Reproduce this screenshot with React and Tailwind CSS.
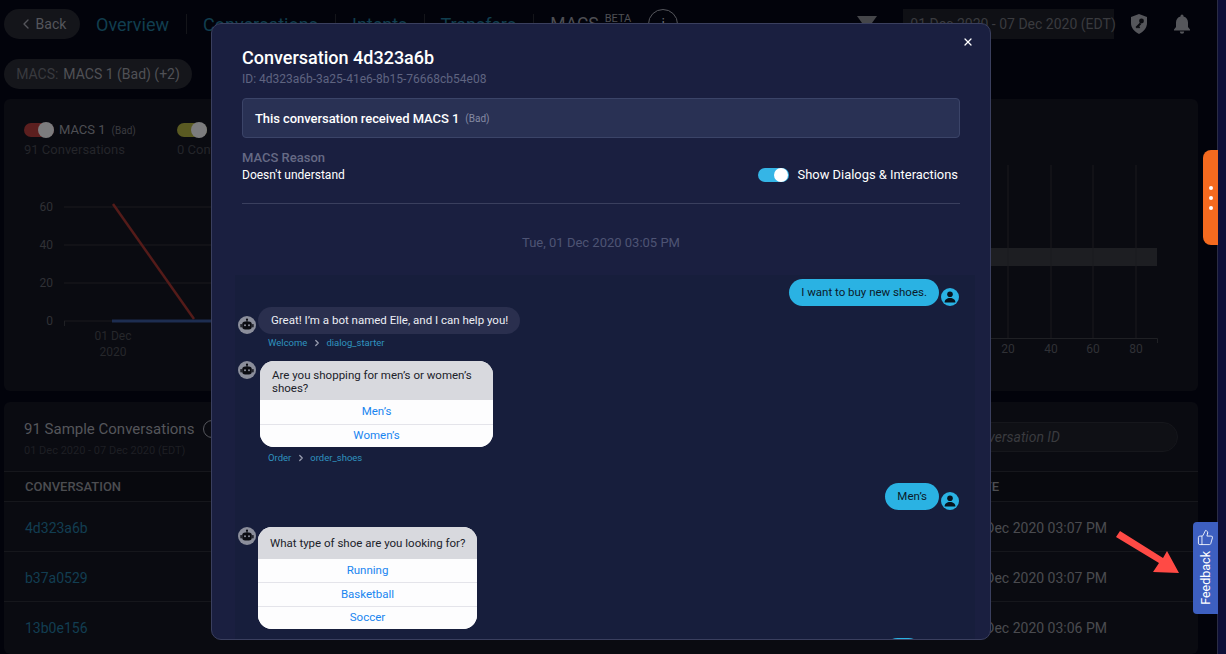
import React from "react";
import { ChevronLeft, ChevronRight, X, ThumbsUp } from "lucide-react";

function BotAvatar() {
  return (
    <div className="w-[18px] h-[18px] shrink-0 rounded-full bg-[#8b8e9b] flex items-center justify-center">
      <svg width="14" height="14" viewBox="0 0 14 14" fill="#0b0c12">
        <circle cx="7" cy="1.6" r="1.1" />
        <rect x="6.5" y="2" width="1" height="2" />
        <rect x="2.2" y="3.6" width="9.6" height="8" rx="3" />
        <rect x="0.4" y="6" width="1.4" height="3.4" rx="0.6" />
        <rect x="12.2" y="6" width="1.4" height="3.4" rx="0.6" />
        <circle cx="5" cy="7.2" r="1" fill="#8b8e9b" />
        <circle cx="9" cy="7.2" r="1" fill="#8b8e9b" />
      </svg>
    </div>
  );
}

function UserAvatar() {
  return (
    <div className="w-[18px] h-[18px] shrink-0 rounded-full bg-[#2ab2e3] flex items-center justify-center">
      <svg width="12" height="12" viewBox="0 0 12 12" fill="#07121c">
        <circle cx="6" cy="3.2" r="2.8" />
        <path d="M0.6 11.6c0-3 2.4-4.6 5.4-4.6s5.4 1.6 5.4 4.6z" />
      </svg>
    </div>
  );
}

function UserMessage({ text, className = "" }) {
  return (
    <div className={"flex justify-end items-end gap-[2px] " + className}>
      <div className="h-[27px] pl-[12px] pr-[12px] rounded-[14px] bg-[#2ab2e3] text-[#0b1a2a] text-[11.5px] flex items-center">{text}</div>
      <UserAvatar />
    </div>
  );
}

function Crumb({ a, b, className }) {
  return (
    <div className={"flex items-center h-[12px] text-[9.5px] text-[#2f93bf] " + className}>
      <span>{a}</span>
      <ChevronRight size={10} strokeWidth={3} className="text-[#9a9eb0] mx-[4.5px]" />
      <span>{b}</span>
    </div>
  );
}

function OptionCard({ title, options, width, titleClass, rowHeight }) {
  return (
    <div className={"rounded-[14px] overflow-hidden bg-white " + width}>
      <div className={"bg-[#d8d9de] text-[#20222a] text-[11.5px] leading-[12.5px] " + titleClass}>{title}</div>
      {options.map((o, i) => (
        <div key={o} className={"flex items-center justify-center text-[11.5px] text-[#1a85f0] bg-[#fdfdfe] " + rowHeight + (i > 0 ? " border-t border-[#e4e4ea]" : "")}>{o}</div>
      ))}
    </div>
  );
}

function Row({ id, time }) {
  return (
    <div className="h-[50px] border-t border-[#16171c] pt-[3px] flex items-center justify-between pl-[21px] pr-[91px] text-[14px]">
      <span className="text-[#123e52]">{id}</span>
      <span className="text-[#4a4b50]">{time}</span>
    </div>
  );
}

function Background() {
  return (
    <div className="w-[1217px] shrink-0 h-full pl-[4px] pr-[19px]">
      <header className="h-[48px] pt-[9px] flex items-start">
        <div className="w-[76px] h-[30px] shrink-0 rounded-full bg-[#14151a] text-[#55565c] text-[14px] flex items-center justify-center gap-[2px] mr-[16px]">
          <ChevronLeft size={16} />
          <span>Back</span>
        </div>
        <nav className="flex items-center h-[30px] shrink-0 whitespace-nowrap text-[18px] text-[#113e4f]">
          <span>Overview</span>
          <span className="w-px h-[20px] bg-[#14151a] ml-[17px] mr-[16px]" />
          <span>Conversations</span>
          <span className="w-px h-[20px] bg-[#14151a] ml-[17px] mr-[16px]" />
          <span>Intents</span>
          <span className="w-px h-[20px] bg-[#14151a] ml-[17px] mr-[15px]" />
          <span>Transfers</span>
          <span className="w-px h-[20px] bg-[#14151a] ml-[17px] mr-[16px]" />
          <span className="text-[#4e4f54] text-[17.5px]">MACS</span>
          <span className="text-[11px] text-[#4e4f54] ml-[6px] -mt-[10px]">BETA</span>
          <span className="w-[30px] h-[30px] rounded-full border border-[#55565c] ml-[17px] flex items-center justify-center text-[#6a6b70] text-[14px]">i</span>
        </nav>
        <div className="ml-[179px] mt-[7px] w-0 h-0 shrink-0 border-x-[10px] border-x-transparent border-t-[14px] border-t-[#45464a]" />
        <div className="ml-[26px] w-[211px] h-[30px] shrink-0 whitespace-nowrap bg-[#0f1015] text-[#3a3b3f] text-[14px] flex items-center pl-[7px]">01 Dec 2020 - 07 Dec 2020 (EDT)</div>
        <svg width="18" height="20" viewBox="0 0 18 20" className="ml-[16px] mt-[5px] shrink-0" fill="#55565b">
          <path d="M9 0l8 3v6c0 5-3.4 8.8-8 11C4.4 17.8 1 14 1 9V3z" />
          <circle cx="11.5" cy="7" r="2.4" fill="#0a0b10" />
          <path d="M10 8.5l-4.5 4.5 1.500 1.500 1-1 1 1 1.200-1.200-1-1 2-2z" fill="#0a0b10" />
        </svg>
        <svg width="18" height="20" viewBox="0 0 18 20" className="ml-[25px] mt-[5px] shrink-0" fill="#55565b">
          <path d="M9 0.5a1.500 1.500 0 0 1 1.500 1.500v.6C13.400 3.300 15 5.700 15 8.500V13l2 2.500v1H1v-1L3 13V8.500c0-2.800 1.600-5.200 4.500-5.900V2A1.500 1.500 0 0 1 9 .5z" />
          <path d="M6.800 17.500h4.400a2.200 2.200 0 0 1-4.400 0z" />
        </svg>
      </header>

      <div className="mt-[11px] w-[188px] h-[30px] rounded-full bg-[#15161b] text-[14px] flex items-center justify-center gap-[5px]">
        <span className="text-[#393a3f]">MACS:</span>
        <span className="text-[#505156]">MACS 1 (Bad) (+2)</span>
      </div>

      <section className="mt-[10px] h-[292px] rounded-[6px] bg-[#0a0b11] pl-[20px] pr-[28px] pt-[22px]">
        <div className="flex h-[39px]">
          <div className="w-[153px] pt-px">
            <div className="flex items-center h-[16px]">
              <div className="relative w-[30px] h-[14px] rounded-full bg-[#5c1f1f]">
                <span className="absolute right-0 -top-px w-[16px] h-[16px] rounded-full bg-[#7c7c7e]" />
              </div>
              <span className="ml-[5px] text-[13px] text-[#4e4f54]">MACS 1</span>
              <span className="ml-[6px] text-[10px] text-[#3a3b40]">(Bad)</span>
            </div>
            <div className="mt-[2px] text-[13px] text-[#24252a]">91 Conversations</div>
          </div>
          <div className="pt-px">
            <div className="flex items-center h-[16px]">
              <div className="relative w-[30px] h-[14px] rounded-full bg-[#5a5a22]">
                <span className="absolute right-0 -top-px w-[16px] h-[16px] rounded-full bg-[#7c7c7e]" />
              </div>
            </div>
            <div className="mt-[2px] w-[34px] overflow-hidden whitespace-nowrap text-[13px] text-[#24252a]">0 Conversations</div>
          </div>
        </div>
        <div className="flex justify-between">
          <svg width="500" height="215" viewBox="0 0 500 215" fontFamily="Roboto, sans-serif" fontSize="12" fill="#303136">
            {[47, 85, 123, 161].map((y) => (
              <line key={y} x1="40" x2="500" y1={y} y2={y} stroke="#1a1b1f" />
            ))}
            <line x1="40.5" x2="40.5" y1="161" y2="166" stroke="#1f2024" />
            <text x="29" y="51" textAnchor="end">60</text>
            <text x="29" y="89" textAnchor="end">40</text>
            <text x="29" y="127" textAnchor="end">20</text>
            <text x="29" y="165" textAnchor="end">0</text>
            <line x1="89" y1="44" x2="170" y2="159" stroke="#541b19" strokeWidth="2.5" />
            <line x1="88" y1="161" x2="500" y2="161" stroke="#1d2d50" strokeWidth="3" />
            <text x="89" y="180" textAnchor="middle" fill="#26272b">01 Dec</text>
            <text x="89" y="196" textAnchor="middle" fill="#26272b">2020</text>
          </svg>
          <svg width="360" height="215" viewBox="0 0 360 215" fontFamily="Roboto, sans-serif" fontSize="12" fill="#303136">
            <rect x="0" y="88" width="347" height="18" fill="#1d1e22" />
            {[198, 241, 283, 326].map((x) => (
              <line key={x} x1={x} x2={x} y1="5" y2="178" stroke="#1a1b1f" />
            ))}
            <path d="M0 178.5H347.5V183" fill="none" stroke="#1f2024" />
            <text x="198" y="193" textAnchor="middle">20</text>
            <text x="241" y="193" textAnchor="middle">40</text>
            <text x="283" y="193" textAnchor="middle">60</text>
            <text x="326" y="193" textAnchor="middle">80</text>
          </svg>
        </div>
      </section>

      <section className="mt-[11px] h-[252px] rounded-[6px] bg-[#0a0b11] overflow-hidden">
        <div className="h-[69px] flex justify-between pl-[20px] pr-[20px] pt-[17px]">
          <div>
            <div className="flex items-center gap-[9px]">
              <span className="text-[15px] leading-[20px] text-[#55565b]">91 Sample Conversations</span>
              <span className="w-[18px] h-[18px] rounded-full border border-[#55565c]" />
            </div>
            <div className="mt-[4px] text-[11px] text-[#1e1f24]">01 Dec 2020 - 07 Dec 2020 (EDT)</div>
          </div>
          <div className="w-[320px] h-[30px] mt-[3px] rounded-full bg-[#0f1015] border border-[#16171c] text-[14px] italic text-[#3a3b3f] flex items-center pl-[60px]">Search Conversation ID</div>
        </div>
        <div className="h-[30px] border-t border-[#16171c] bg-[#08090e] flex items-center justify-between pl-[21px] pr-[199px] text-[13px] font-medium text-[#4c4d51]">
          <span>CONVERSATION</span>
          <span>DATE</span>
        </div>
        <Row id="4d323a6b" time="01 Dec 2020 03:07 PM" />
        <Row id="b37a0529" time="01 Dec 2020 03:07 PM" />
        <Row id="13b0e156" time="01 Dec 2020 03:06 PM" />
      </section>
    </div>
  );
}

function Modal() {
  return (
    <div className="absolute left-[211px] top-[23px] w-[780px] h-[617px] rounded-[10px] border border-[#3a3f5e] bg-[#1a1f40] overflow-hidden pl-[30px] pr-[30px] pt-[22px]">
      <X size={12} strokeWidth={2.5} className="absolute right-[16px] top-[12px] text-white" />
      <h2 className="text-[18px] leading-[24px] font-medium text-white">Conversation 4d323a6b</h2>
      <div className="text-[12px] leading-[16px] pt-px h-[16px] text-[#5f6480]">ID: 4d323a6b-3a25-41e6-8b15-76668cb54e08</div>
      <div className="mt-[12px] h-[40px] rounded-[4px] border border-[#3b4468] bg-[#293154] flex items-center pl-[12px] pt-px">
        <span className="text-[13px] tracking-[-0.06px] font-medium text-white">This conversation received MACS 1</span>
        <span className="ml-[6px] text-[10px] text-[#858aa3]">(Bad)</span>
      </div>
      <div className="flex justify-between items-end">
        <div className="mt-[11px]">
          <div className="text-[13px] leading-[18px] font-medium text-[#666a85]">MACS Reason</div>
          <div className="text-[12px] leading-[16px] text-white">Doesn't understand</div>
        </div>
        <div className="flex items-center pr-[2px] h-[16px]">
          <div className="relative w-[31px] h-[14px] rounded-full bg-[#35b5e6]">
            <span className="absolute right-[1px] top-0 w-[14px] h-[14px] rounded-full bg-white" />
          </div>
          <span className="ml-[9px] text-[12.9px] text-white">Show Dialogs &amp; Interactions</span>
        </div>
      </div>
      <div className="mt-[20px] h-px bg-[#3a3f5e]" />
      <div className="mt-[30px] text-center text-[13px] leading-[18px] text-[#4e5474]">Tue, 01 Dec 2020 03:05 PM</div>

      <div className="mt-[23px] -ml-[7px] -mr-[15px] pl-[3px] pr-[16px] pt-[4px] pb-[20px] bg-[#171e3c]">
        <UserMessage text="I want to buy new shoes." />
        <div className="mt-px flex items-end gap-[2px]">
          <BotAvatar />
          <div className="h-[27px] pl-[13px] pr-[12px] rounded-[14px] bg-[#2a2f4e] text-[#eceef4] text-[11.5px] flex items-center">Great! I’m a bot named Elle, and I can help you!</div>
        </div>
        <Crumb a="Welcome" b="dialog_starter" className="mt-[3px] ml-[30px]" />

        <div className="mt-[12px] flex items-start gap-[4px]">
          <BotAvatar />
          <OptionCard
            title="Are you shopping for men’s or women’s shoes?"
            options={["Men’s", "Women’s"]}
            width="w-[233px]"
            titleClass="h-[39px] pl-[12px] pr-[12px] pt-[8px]"
            rowHeight="h-[23.5px]"
          />
        </div>
        <Crumb a="Order" b="order_shoes" className="mt-[5px] ml-[30px]" />

        <UserMessage text="Men’s" className="mt-[19px]" />

        <div className="mt-[17px] flex items-start gap-[2px]">
          <BotAvatar />
          <OptionCard
            title="What type of shoe are you looking for?"
            options={["Running", "Basketball", "Soccer"]}
            width="w-[219px]"
            titleClass="h-[32px] pl-[12px] flex items-center"
            rowHeight="h-[23.3px]"
          />
        </div>

        <div className="mt-[9px] flex justify-end pr-[37px]">
          <div className="w-[38px] h-[27px] rounded-[14px] bg-[#2ab2e3]" />
        </div>
      </div>
    </div>
  );
}

export default function App() {
  return (
    <div className="relative w-[1226px] h-[654px] overflow-hidden bg-[#02030b] flex" style={{ fontFamily: "Roboto, 'Liberation Sans', sans-serif" }}>
      <Background />
      <div className="w-px h-full bg-[#2a2c44]" />
      <div className="flex-1 h-full bg-[#0d0f38]" />
      <Modal />

      <div className="absolute left-[1203px] top-[150px] w-[15px] h-[95px] rounded-l-[8px] bg-[#f46a1f] flex flex-col items-center justify-center gap-[6px]">
        <span className="w-[4px] h-[4px] rounded-full bg-white" />
        <span className="w-[4px] h-[4px] rounded-full bg-white" />
        <span className="w-[4px] h-[4px] rounded-full bg-white" />
      </div>

      <div className="absolute left-[1193px] top-[522px] w-[25px] h-[92px] rounded-l-[4px] bg-[#3d5fc0] flex flex-col items-center pt-[7px]">
        <ThumbsUp size={17} strokeWidth={1.2} className="text-white" />
        <span className="mt-[5px] text-[12.5px] leading-[25px] text-white [writing-mode:vertical-rl] rotate-180">Feedback</span>
      </div>

      <svg className="absolute left-[1110px] top-[525px]" width="85" height="60" viewBox="0 0 85 60" fill="#ff4a45">
        <path d="M10 6L53 33L57 26L69 48L43 47L49 38L6 12Z" />
      </svg>
    </div>
  );
}
